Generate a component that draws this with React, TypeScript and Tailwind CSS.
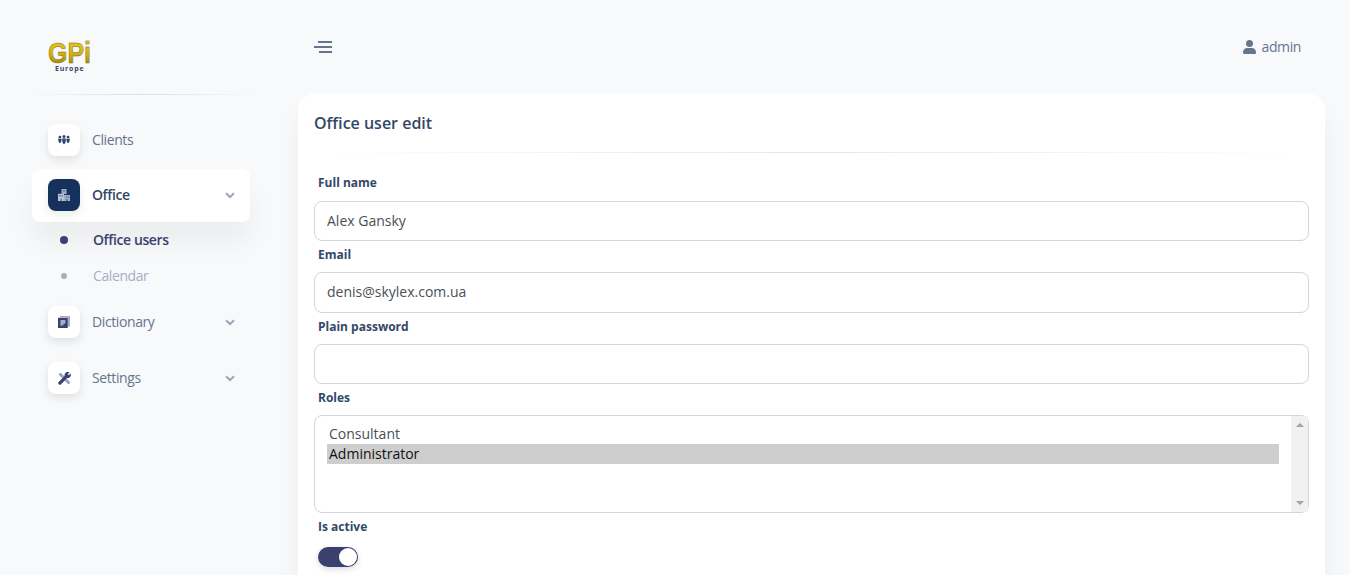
import React from "react";

const ChevronDown = () => (
  <svg width="10" height="7" viewBox="0 0 10 7" className="ml-auto mr-[-1px]" fill="none" stroke="#9fa3bd" strokeWidth="2">
    <path d="M1 1.2 L5 5 L9 1.2" />
  </svg>
);

const IconBox = ({ active, children }: { active?: boolean; children: React.ReactNode }) => (
  <div
    className={
      "w-8 h-8 rounded-lg flex items-center justify-center shrink-0 " +
      (active
        ? "bg-[#16325c] shadow-[0_4px_8px_rgba(20,23,39,0.08)]"
        : "bg-white shadow-[0_4px_8px_rgba(20,23,39,0.1)]")
    }
  >
    {children}
  </div>
);

const ClientsIcon = () => (
  <svg width="12" height="10" viewBox="0 0 12 10" fill="#344172">
    <circle cx="1.9" cy="2.1" r="1.4" />
    <circle cx="6" cy="1.6" r="1.5" />
    <circle cx="10.1" cy="2.1" r="1.4" />
    <path d="M0 3.8h3.7l-.5 3.2-1.3 1.3-1.2-1.3z" />
    <path d="M4 3.4h4l-.6 4.4L6 9.5 4.6 7.8z" />
    <path d="M8.3 3.8H12l-.7 3.2-1.2 1.3L8.8 7z" />
  </svg>
);

const OfficeIcon = () => (
  <svg width="12" height="12" viewBox="0 0 12 12" fill="#b9c3d6">
    <path opacity="0.85" d="M3.5 0h5v5h-5z" />
    <path d="M0 4.8h6V12H0z" />
    <path opacity="0.85" d="M6 6h6v6H6z" />
    <path fill="#3f5880" d="M1.2 6.3h1.3v1.3H1.2zM3.6 6.3h1.3v1.3H3.6zM8 7.4h1.2v1.2H8zM10 7.4h1.2v1.2H10zM2.6 9.5h1V12h-1zM5 1.4h2v1H5zM8.2 10h1.2v2H8.2z" />
  </svg>
);

const DictIcon = () => (
  <svg width="12" height="12" viewBox="0 0 12 12">
    <path fill="#a6acc8" d="M2 0h10v10.5h-2V1.5H2z" />
    <path fill="#3a416f" d="M0 1.8h9.8V12H0z" />
    <path fill="#a9afc9" d="M2.4 4h5v3.8h-2v1.6h-3z" />
  </svg>
);

const ToolsIcon = () => (
  <svg width="13" height="13" viewBox="0 0 12 12">
    <path stroke="#9aa0bf" strokeWidth="2.6" fill="none" d="M1.4 1.4 L10.6 10.6" />
    <path fill="#3a416f" d="M0.4 9.4 L6.1 3.7 C5.8 2.2 6.6 0.5 8.4 0.1 C9.3 -0.1 10.2 0 10.7 0.3 L8.9 2.1 L9.9 3.1 L11.7 1.3 C12.2 2.6 11.8 4.1 10.7 5 C9.9 5.6 9 5.7 8.3 5.5 L2.6 11.6 C1.4 12.6 -0.5 10.6 0.4 9.4 Z" />
  </svg>
);

const NavItem = ({ label, icon, chevron }: { label: string; icon: React.ReactNode; chevron?: boolean }) => (
  <div className="flex items-center h-[53px] pb-[1px] px-4 mx-8 mb-[3px] text-[14px] tracking-[-0.4px] text-[#67748e]">
    <IconBox>{icon}</IconBox>
    <span className="ml-3 pb-[2px]">{label}</span>
    {chevron && <ChevronDown />}
  </div>
);

const Label = ({ children }: { children: React.ReactNode }) => (
  <label className="block ml-1 text-[12px] leading-[18px] font-bold text-[#344767]">{children}</label>
);

const inputClass =
  "block w-full h-10 rounded-lg border border-[#d2d6da] bg-white px-3 pb-[2px] text-[14px] text-[#495057] outline-none";

export default function App() {
  return (
    <div className="h-screen overflow-hidden flex bg-[#f8f9fa] font-['Open_Sans',sans-serif]">
      <aside className="w-[282px] shrink-0 flex flex-col">
        <div className="h-[95px] relative pl-12 pt-[34px]">
          <svg width="48" height="40" viewBox="0 0 48 40" className="overflow-visible">
            <defs>
              <linearGradient id="gold" x1="0" y1="0" x2="0" y2="1">
                <stop offset="0" stopColor="#f0d21f" />
                <stop offset="0.55" stopColor="#d3b00c" />
                <stop offset="1" stopColor="#8a7512" />
              </linearGradient>
            </defs>
            <text
              x="0"
              y="29"
              fontFamily="'Liberation Sans',sans-serif"
              fontWeight="700"
              fontSize="30"
              fill="url(#gold)"
              stroke="#7a6a14"
              strokeWidth="0.5"
              textLength="43"
              lengthAdjust="spacingAndGlyphs"
            >
              GPi
            </text>
            <text x="7" y="37" fontFamily="'Open Sans',sans-serif" fontWeight="700" fontSize="7" letterSpacing="0.8" fill="#344767">
              Europe
            </text>
          </svg>
          <div className="absolute left-6 right-6 bottom-0 h-px bg-gradient-to-r from-transparent via-[#dcdfe3] to-transparent" />
        </div>
        <nav className="pt-[19px]">
          <div className="-mb-[1px]">
            <NavItem label="Clients" icon={<ClientsIcon />} />
          </div>
          <div className="flex items-center h-[53px] pb-[1px] px-4 mx-8 rounded-lg bg-white shadow-[0_20px_27px_rgba(0,0,0,0.05)] text-[14px] tracking-[-0.4px] font-semibold text-[#344767]">
            <IconBox active>
              <OfficeIcon />
            </IconBox>
            <span className="ml-3 pb-[2px]">Office</span>
            <ChevronDown />
          </div>
          <div className="flex items-center h-9 pl-[60px] text-[14px] tracking-[-0.4px] font-semibold text-[#3a416f]">
            <span className="w-2 h-2 rounded-full bg-[#3a416f] mr-[25px]" />
            <span className="pb-[2px]">Office users</span>
          </div>
          <div className="flex items-center h-9 pl-[61px] text-[14px] tracking-[-0.4px] text-[#a9adc4]">
            <span className="w-1.5 h-1.5 rounded-full bg-[#a9adc4] mr-[26px]" />
            <span className="pb-[2px]">Calendar</span>
          </div>
          <div className="mt-[2px]">
            <NavItem label="Dictionary" icon={<DictIcon />} chevron />
          </div>
          <NavItem label="Settings" icon={<ToolsIcon />} chevron />
        </nav>
      </aside>

      <main className="flex-1 min-w-0 pl-4 pr-[25px]">
        <header className="h-[94px] flex items-start justify-between">
          <svg width="18" height="14" viewBox="0 0 18 14" className="ml-4 mt-10" stroke="#67748e" strokeWidth="2">
            <path d="M4 2h14M0 7h18M5 12h13" />
          </svg>
          <div className="flex items-center mt-[37px] mr-6 text-[14px] tracking-[-0.4px] leading-5 text-[#67748e]">
            <svg width="13" height="14" viewBox="0 0 13 14" fill="#67748e" className="mr-[6px]">
              <circle cx="6.5" cy="3.5" r="3.5" />
              <path d="M0 12.5C0 9.5 2 8 4 8h5c2 0 4 1.5 4 4.5 0 1-.6 1.5-1.5 1.5h-10C.6 14 0 13.5 0 12.5z" />
            </svg>
            admin
          </div>
        </header>

        <section className="rounded-2xl bg-white shadow-[0_20px_27px_rgba(0,0,0,0.05)] px-4 pb-10">
          <h2 className="h-[58px] pt-[18px] text-[16px] leading-[22px] font-semibold text-[#344767]">Office user edit</h2>
          <div className="h-px bg-gradient-to-r from-transparent via-[#e4e6e9] to-transparent" />

          <div className="pt-[21px]">
            <Label>Full name</Label>
            <input className={inputClass + " mt-[9px]"} defaultValue="Alex Gansky" />
            <div className="mt-[5px]">
              <Label>Email</Label>
            </div>
            <input className={inputClass + " mt-[8px] h-[41px]"} defaultValue="denis@skylex.com.ua" />
            <div className="mt-[5px]">
              <Label>Plain password</Label>
            </div>
            <input className={inputClass + " mt-[8px]"} />
            <div className="mt-[5px]">
              <Label>Roles</Label>
            </div>
            <div className="relative mt-[8px]">
              <select
                multiple
                defaultValue={["Administrator"]}
                className="block w-full h-[98px] rounded-lg border border-[#d2d6da] bg-white pt-2 pb-2 pl-3 pr-[29px] text-[14px] text-[#495057] outline-none"
              >
                <option className="px-0.5 h-5 leading-5">Consultant</option>
                <option className="px-0.5 h-5 leading-5">Administrator</option>
              </select>
              <div className="absolute right-[1px] top-[1px] bottom-[1px] w-[17px] bg-[#f1f1f1] flex flex-col items-center justify-between py-[7px]">
                <svg width="8" height="4" viewBox="0 0 8 4" fill="#a3a3a3">
                  <path d="M4 0l4 4H0z" />
                </svg>
                <svg width="8" height="4" viewBox="0 0 8 4" fill="#a3a3a3">
                  <path d="M0 0h8L4 4z" />
                </svg>
              </div>
            </div>
            <div className="mt-[5px]">
              <Label>Is active</Label>
            </div>
            <div className="mt-[11px] ml-1 w-10 h-5 rounded-full bg-[#3a416f] relative shadow-[0_2px_6px_rgba(0,0,0,0.15)]">
              <span className="absolute right-[1px] top-[1px] w-[18px] h-[18px] rounded-full bg-white" />
            </div>
          </div>
        </section>
      </main>
    </div>
  );
}
